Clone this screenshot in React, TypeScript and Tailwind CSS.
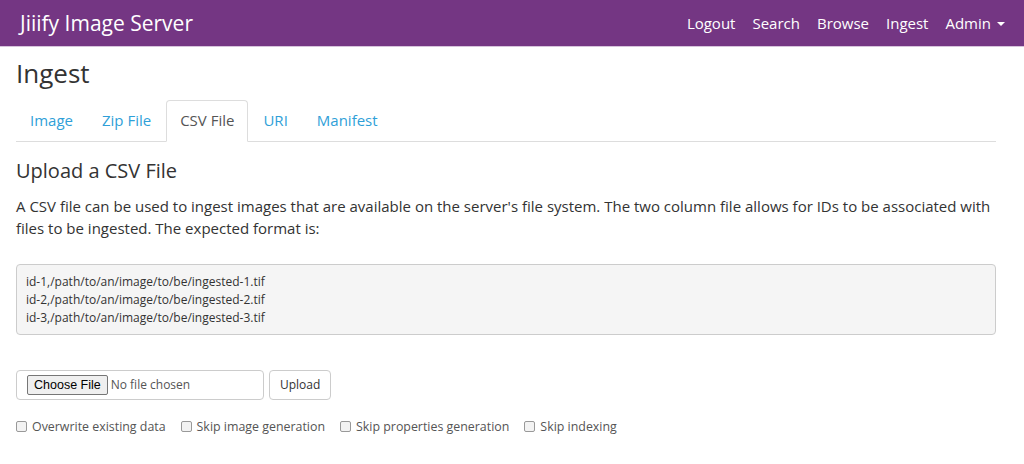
import React from "react";

const navLinks = ["Logout", "Search", "Browse", "Ingest"];
const tabs = ["Image", "Zip File", "CSV File", "URI", "Manifest"];
const options = [
  "Overwrite existing data",
  "Skip image generation",
  "Skip properties generation",
  "Skip indexing",
];

export default function App() {
  return (
    <div className="min-h-[464px] bg-white font-['Open_Sans',sans-serif] text-[#333]">
      <nav className="flex h-[47px] items-center justify-between border-b border-[#d6c3db] bg-[#743683] pl-[20px] pr-[19px] text-white">
        <span className="text-[21px] leading-none">Jiiify Image Server</span>
        <ul className="flex items-center gap-[17px] text-[15px]">
          {navLinks.map((l) => (
            <li key={l}>{l}</li>
          ))}
          <li className="flex items-center gap-[6px]">
            Admin
            <span className="mt-[2px] h-0 w-0 border-x-[4px] border-t-[4px] border-x-transparent border-t-white" />
          </li>
        </ul>
      </nav>

      <main className="px-[16px] pr-[28px]">
        <h1 className="mt-[8px] text-[26px] leading-[36px]">Ingest</h1>

        <ul className="mt-[9px] flex border-b border-[#ddd] text-[15px]">
          {tabs.map((t) => (
            <li
              key={t}
              className={
                t === "CSV File"
                  ? "-mb-px mr-px rounded-t-[4px] border border-b-white border-[#ddd] bg-white px-[13px] py-[8px] text-[#555]"
                  : "mr-px border border-transparent px-[13px] py-[8px] text-[#2f9fd8]"
              }
            >
              {t}
            </li>
          ))}
        </ul>

        <h3 className="mt-[16px] text-[20px] leading-[26px]">Upload a CSV File</h3>
        <p className="mt-[11px] text-[15px] leading-[22px]">
          A CSV file can be used to ingest images that are available on the server's file system. The two column file
          allows for IDs to be associated with files to be ingested. The expected format is:
        </p>

        <pre className="mt-[25px] rounded-[4px] border border-[#ccc] bg-[#f5f5f5] px-[9px] pb-[7px] pt-[8px] font-['Open_Sans',sans-serif] text-[12px] leading-[18px] text-[#333]">
          {"id-1,/path/to/an/image/to/be/ingested-1.tif\nid-2,/path/to/an/image/to/be/ingested-2.tif\nid-3,/path/to/an/image/to/be/ingested-3.tif"}
        </pre>

        <div className="mt-[35px] flex items-center gap-[5px]">
          <div className="flex h-[30px] w-[248px] items-center gap-[3px] rounded-[4px] border border-[#ccc] px-[10px] text-[12px]">
            <span className="rounded-[2px] border border-[#767676] bg-[#efefef] px-[6px] py-px font-['Liberation_Sans',sans-serif] text-[12.5px] leading-[16px] text-black">
              Choose File
            </span>
            <span className="text-[#555]">No file chosen</span>
          </div>
          <button className="h-[30px] rounded-[4px] border border-[#ccc] bg-white px-[10px] text-[12px] text-[#333]">
            Upload
          </button>
        </div>

        <div className="mt-[18px] flex items-center gap-[15px] text-[12.4px] text-[#555]">
          {options.map((o) => (
            <label key={o} className="flex items-center gap-[5px]">
              <span className="h-[11px] w-[11px] rounded-[2px] border border-[#999] bg-[#f3f3f3]" />
              {o}
            </label>
          ))}
        </div>
      </main>
    </div>
  );
}
